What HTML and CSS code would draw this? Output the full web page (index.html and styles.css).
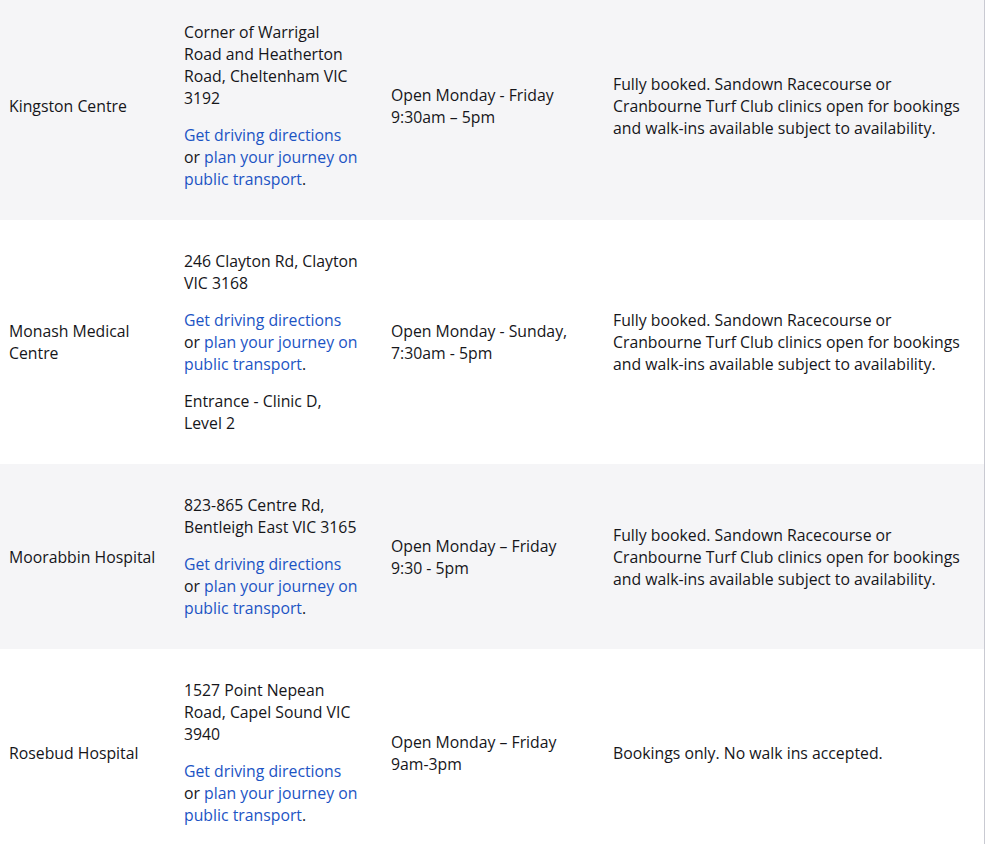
FILE: index.html
```html
<!DOCTYPE html>
<html lang="en">
<head>
<meta charset="utf-8">
<title>Clinic locations</title>
<link rel="stylesheet" href="styles.css">
</head>
<body>
<div class="wrap">
<table class="clinics">
  <colgroup>
    <col class="c1"><col class="c2"><col class="c3"><col class="c4">
  </colgroup>
  <tbody>
    <tr class="alt">
      <td>Kingston Centre</td>
      <td>
        <p>Corner of Warrigal Road and Heatherton Road, Cheltenham VIC 3192</p>
        <p><a href="#">Get driving directions</a> or <a href="#">plan your journey on public transport</a>.</p>
      </td>
      <td>Open Monday - Friday 9:30am – 5pm</td>
      <td>Fully booked. Sandown Racecourse or Cranbourne Turf Club clinics open for bookings and walk-ins available subject to availability.</td>
    </tr>
    <tr>
      <td>Monash Medical Centre</td>
      <td>
        <p>246 Clayton Rd, Clayton VIC 3168</p>
        <p><a href="#">Get driving directions</a> or <a href="#">plan your journey on public transport</a>.</p>
        <p>Entrance - Clinic D, Level 2</p>
      </td>
      <td>Open Monday - Sunday, 7:30am - 5pm</td>
      <td>Fully booked. Sandown Racecourse or Cranbourne Turf Club clinics open for bookings and walk-ins available subject to availability.</td>
    </tr>
    <tr class="alt">
      <td>Moorabbin Hospital</td>
      <td>
        <p>823-865 Centre Rd, Bentleigh East VIC 3165</p>
        <p><a href="#">Get driving directions</a> or <a href="#">plan your journey on public transport</a>.</p>
      </td>
      <td>Open Monday – Friday 9:30 - 5pm</td>
      <td>Fully booked. Sandown Racecourse or Cranbourne Turf Club clinics open for bookings and walk-ins available subject to availability.</td>
    </tr>
    <tr>
      <td>Rosebud Hospital</td>
      <td>
        <p>1527 Point Nepean Road, Capel Sound VIC 3940</p>
        <p><a href="#">Get driving directions</a> or <a href="#">plan your journey on public transport</a>.</p>
      </td>
      <td>Open Monday – Friday 9am-3pm</td>
      <td>Bookings only. No walk ins accepted.</td>
    </tr>
  </tbody>
</table>
</div>
</body>
</html>
```
FILE: styles.css
```css
html, body {
  margin: 0;
  padding: 0;
  background: #ffffff;
}
body {
  font-family: "Open Sans", "Noto Sans", sans-serif;
  font-size: 15.8px;
  line-height: 22px;
  color: #16161a;
}
.wrap {
  width: 984px;
  margin-top: -9px;
  border-right: 1px solid #c9cad2;
}
.clinics {
  width: 984px;
  border-collapse: collapse;
  table-layout: fixed;
}
.c1 { width: 175px; }
.c2 { width: 207px; }
.c3 { width: 222px; }
.c4 { width: 380px; }
.clinics td {
  padding: 30px 22.5px 30px 9px;
  vertical-align: middle;
}
.clinics td:first-child {
  padding-right: 8px;
}
.clinics td:last-child {
  padding-right: 13px;
}
.clinics tr.alt td {
  background: #f5f5f7;
}
.clinics p {
  margin: 0 0 15px;
}
.clinics p:last-child {
  margin-bottom: 0;
}
.clinics a {
  color: #1c54c4;
  text-decoration: none;
}
```
